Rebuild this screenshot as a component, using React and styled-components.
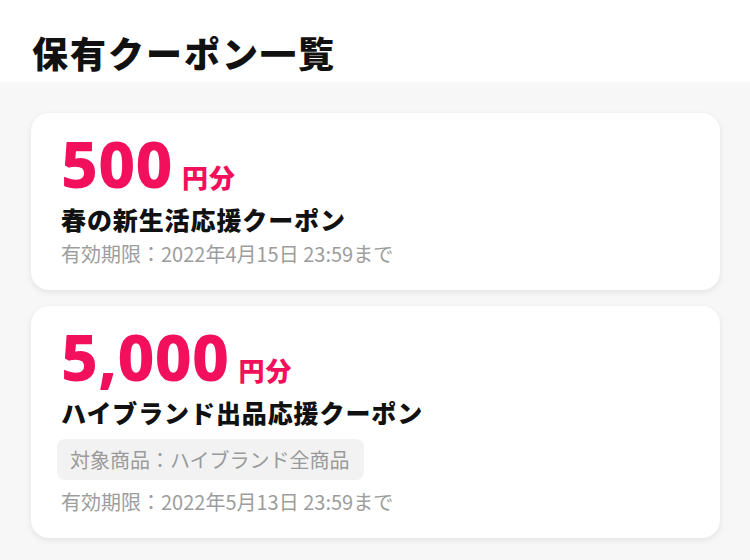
import styled, { createGlobalStyle } from 'styled-components';

const GlobalStyle = createGlobalStyle`
  html, body {
    margin: 0;
    padding: 0;
    background: #f7f7f7;
  }
  body {
    font-family: "Noto Sans CJK JP", "Noto Sans", sans-serif;
    color: #111;
  }
`;

const Page = styled.div`
  width: 750px;
  min-height: 560px;
  background: #f7f7f7;
`;

const Header = styled.header`
  background: #fff;
  padding: 31px 32px 8px;
`;

const Title = styled.h1`
  margin: 0;
  font-size: 36px;
  line-height: 43px;
  font-weight: 900;
  letter-spacing: 2px;
`;

const List = styled.div`
  display: flex;
  flex-direction: column;
  gap: 16px;
  padding: 31px 30px 20px 31px;
`;

const Card = styled.div`
  background: #fff;
  border-radius: 18px;
  box-shadow: 0 2px 6px rgba(0, 0, 0, 0.09);
  padding: 19px 30px 22px;
  display: flex;
  flex-direction: column;
  align-items: flex-start;
`;

const Amount = styled.div`
  display: flex;
  align-items: baseline;
  gap: 9px;
  color: #f2105c;
`;

const Value = styled.span`
  font-family: "Noto Sans", sans-serif;
  font-size: 64px;
  line-height: 64px;
  font-weight: 800;
  letter-spacing: 0.3px;
`;

const Unit = styled.span`
  font-size: 26px;
  line-height: 1;
  font-weight: 900;
  letter-spacing: 1px;
`;

const Name = styled.div`
  margin-top: 6px;
  font-size: 25px;
  line-height: 35px;
  font-weight: 900;
  letter-spacing: 0.9px;
  color: #111;
`;

const Tag = styled.div`
  margin-top: 9px;
  margin-left: -4px;
  padding: 0 14px 0 13px;
  height: 41px;
  display: flex;
  align-items: center;
  background: #f2f2f2;
  border-radius: 8px;
  color: #9a9a9a;
  font-size: 20px;
`;

const Expiry = styled.div`
  margin-top: ${(p) => (p.$afterTag ? '8px' : '3px')};
  font-size: 20px;
  line-height: 28px;
  color: #9d9d9d;
`;

const coupons = [
  {
    value: '500',
    name: '春の新生活応援クーポン',
    expiry: '有効期限：2022年4月15日 23:59まで',
  },
  {
    value: '5,000',
    name: 'ハイブランド出品応援クーポン',
    target: '対象商品：ハイブランド全商品',
    expiry: '有効期限：2022年5月13日 23:59まで',
  },
];

const App = () => {
  return (
    <Page>
      <GlobalStyle />
      <Header>
        <Title>保有クーポン一覧</Title>
      </Header>
      <List>
        {coupons.map((c) => (
          <Card key={c.value}>
            <Amount>
              <Value>{c.value}</Value>
              <Unit>円分</Unit>
            </Amount>
            <Name>{c.name}</Name>
            {c.target && <Tag>{c.target}</Tag>}
            <Expiry $afterTag={!!c.target}>{c.expiry}</Expiry>
          </Card>
        ))}
      </List>
    </Page>
  );
};

export default App;
